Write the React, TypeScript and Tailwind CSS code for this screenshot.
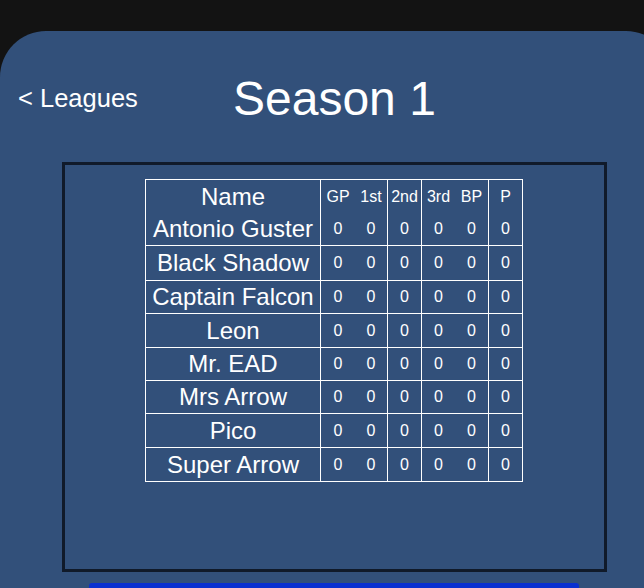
import React from "react";

const players = [
  { name: "Antonio Guster", h: "h-[33px]" },
  { name: "Black Shadow", h: "h-[35px]" },
  { name: "Captain Falcon", h: "h-[33px]" },
  { name: "Leon", h: "h-[34px]" },
  { name: "Mr. EAD", h: "h-[33px]" },
  { name: "Mrs Arrow", h: "h-[33px]" },
  { name: "Pico", h: "h-[34px]" },
  { name: "Super Arrow", h: "h-[34px]" },
];

const cols = ["GP", "1st", "2nd", "3rd", "BP", "P"];
// which stat columns carry a right border
const colBorder = ["", "border-r border-white", "border-r border-white", "", "border-r border-white", "border-r border-white"];

function Row({
  name,
  values,
  heightClass,
  bottom,
}: {
  name: string;
  values: string[];
  heightClass: string;
  bottom: boolean;
}) {
  return (
    <div
      className={`grid grid-cols-[175px_34px_33px_34px_33px_34px_34px] ${heightClass} ${
        bottom ? "border-b border-white" : ""
      }`}
    >
      <div className="flex items-center justify-center border-r border-white text-[24px] leading-none whitespace-nowrap">
        {name}
      </div>
      {values.map((v, i) => (
        <div
          key={i}
          className={`flex items-center justify-center text-[16px] leading-none ${colBorder[i]}`}
        >
          {v}
        </div>
      ))}
    </div>
  );
}

export default function App() {
  return (
    <div
      className="h-[588px] w-[644px] overflow-hidden bg-[#131313] pt-[31px] text-white"
      style={{ fontFamily: '"Liberation Sans", Arial, sans-serif' }}
    >
      <div className="mr-[-28px] h-[557px] rounded-t-[46px] bg-[#32507a] pt-[44px]">
        <div className="flex h-[48px] items-center pl-[18px]">
          <div className="w-[215px] text-[25.5px] leading-none whitespace-nowrap">&lt; Leagues</div>
          <div className="text-[48px] leading-none whitespace-nowrap">Season 1</div>
        </div>
        <div className="ml-[62px] mt-[39px] flex h-[410px] w-[545px] border-[3px] border-[#101a2a] pl-[80px] pt-[14px]">
          <div className="h-fit w-[378px] border-l border-t border-white">
            <Row name="Name" values={cols} heightClass="h-[33px]" bottom={false} />
            {players.map((p) => (
              <Row key={p.name} name={p.name} values={["0", "0", "0", "0", "0", "0"]} heightClass={p.h} bottom />
            ))}
          </div>
        </div>
        <div className="ml-[89px] mt-[11px] h-[20px] w-[490px] rounded-t-[3px] bg-[#0a30d0]" />
      </div>
    </div>
  );
}
